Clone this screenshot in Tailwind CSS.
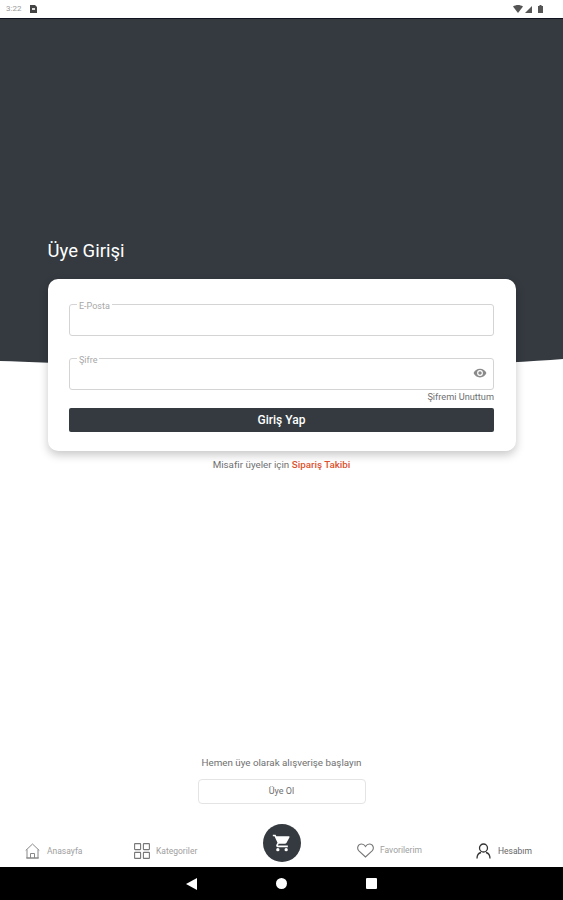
<!DOCTYPE html>
<html lang="tr">
<head>
<meta charset="utf-8">
<script src="https://cdn.jsdelivr.net/npm/@tailwindcss/browser@4"></script>
</head>
<body class="bg-white">
<div class="flex h-[900px] w-[563px] flex-col overflow-hidden font-['Roboto',sans-serif]">
  <div class="flex h-[18px] shrink-0 items-center justify-between bg-white pl-[6px] pr-[20px]">
    <div class="flex items-center gap-[9px]">
      <span class="text-[8px] leading-none text-[#9a9a9a]">3:22</span>
      <svg width="7" height="8" viewBox="0 0 7 8"><path d="M0 0h5l2 2v6H0z" fill="#444"/><rect x="2" y="3" width="3" height="2" fill="#ddd"/></svg>
    </div>
    <div class="flex items-center">
      <svg width="10" height="8" viewBox="0 0 10 8"><path d="M0 1.500C3-.5 7-.5 10 1.500L5 8z" fill="#555"/></svg>
      <svg width="7" height="7" viewBox="0 0 7 7" class="ml-[2px]"><path d="M7 0v7H0z" fill="#555"/></svg>
      <svg width="5" height="8" viewBox="0 0 5 8" class="ml-[6px]"><path d="M1.500 0h2v1H5v7H0V1h1.500z" fill="#555"/></svg>
    </div>
  </div>
  <main class="relative flex min-h-0 flex-1 flex-col">
    <svg class="absolute left-0 top-0" width="563" height="360" viewBox="0 0 563 360" preserveAspectRatio="none">
      <path d="M0 0H563V341C500 346 400 350 281 350C170 350 60 345 0 343Z" fill="#343a40"/>
      <path d="M0 0H563V1H0Z" fill="#10131f"/>
    </svg>
    <div class="relative flex flex-1 flex-col items-center pt-[221px]">
      <div class="w-[468px]">
        <h1 class="text-[18.5px] leading-[24px] font-normal text-white">Üye Girişi</h1>
        <form class="mt-[16px] flex h-[172px] flex-col rounded-[10px] bg-white px-[21.5px] pt-[25px] shadow-[0_4px_10px_rgba(0,0,0,0.22)]">
          <div class="relative h-[32px] rounded-[3px] border border-[#d4d4d4]">
            <span class="absolute left-[7px] top-[-4px] bg-white px-[2px] text-[9px] leading-[10px] text-[#a8a8a8]">E-Posta</span>
          </div>
          <div class="relative mt-[22px] flex h-[32px] items-center justify-end rounded-[3px] border border-[#d4d4d4] pr-[6px]">
            <span class="absolute left-[7px] top-[-4px] bg-white px-[2px] text-[9px] leading-[10px] text-[#a8a8a8]">Şifre</span>
            <svg width="14" height="14" viewBox="0 0 24 24" class="-translate-y-px"><path d="M12 4.500C7 4.500 2.700 7.600 1 12c1.700 4.400 6 7.500 11 7.500s9.300-3.100 11-7.500c-1.700-4.400-6-7.500-11-7.500zM12 17a5 5 0 1 1 0-10 5 5 0 0 1 0 10zm0-8a3 3 0 1 0 0 6 3 3 0 0 0 0-6z" fill="#8a8a8a"/></svg>
          </div>
          <a class="mt-[1px] self-end text-[9.2px] leading-[12px] text-[#6f6f6f]">Şifremi Unuttum</a>
          <button type="button" class="mt-[5px] h-[24px] rounded-[2px] bg-[#343a40] text-[12px] font-medium text-white">Giriş Yap</button>
        </form>
        <p class="mt-[8px] text-center text-[9.8px] leading-[12px] text-[#6f6f6f]">Misafir üyeler için <span class="font-medium text-[#dc5230]">Sipariş Takibi</span></p>
      </div>
      <div class="mt-auto flex flex-col items-center">
        <p class="text-[9.8px] leading-[12px] text-[#6f6f6f]">Hemen üye olarak alışverişe başlayın</p>
        <button type="button" class="mt-[10px] h-[25px] w-[168px] rounded-[4px] border border-[#e4e4e4] bg-white text-[9px] text-[#6f6f6f]">Üye Ol</button>
      </div>
      <nav class="relative mt-[20px] flex h-[43px] w-full items-center text-[8.5px] text-[#a0a0a0]">
        <a class="absolute left-[25px] top-[19px] flex items-center gap-[7px]">
          <svg width="15" height="16" viewBox="0 0 15 16" fill="none" stroke="#888" stroke-width="1"><path d="M.7 7.500 7.500 1l6.800 6.500M2 6.500V15h11V6.500M5.500 15v-4.500h4V15M1 15h13"/></svg>
          <span>Anasayfa</span>
        </a>
        <a class="absolute left-[134px] top-[19px] flex items-center gap-[6px]">
          <svg width="16" height="16" viewBox="0 0 16 16" fill="none" stroke="#777" stroke-width="1.100"><rect x=".6" y=".6" width="6" height="6" rx=".5"/><rect x="9.400" y=".6" width="6" height="6" rx=".5"/><rect x=".6" y="9.400" width="6" height="6" rx=".5"/><rect x="9.400" y="9.400" width="6" height="6" rx=".5"/></svg>
          <span>Kategoriler</span>
        </a>
        <a class="absolute left-[263px] top-[0px] flex h-[38px] w-[38px] items-center justify-center rounded-full bg-[#343a40]">
          <svg width="20" height="20" viewBox="0 0 24 24"><path d="M15.550 13c.750 0 1.410-.41 1.750-1.030l3.580-6.490A1 1 0 0 0 20.010 4H5.210l-.94-2H1v2h2l3.600 7.590-1.350 2.440C4.520 15.370 5.480 17 7 17h12v-2H7l1.100-2h7.450zM7 18a2 2 0 1 0 0 4 2 2 0 0 0 0-4zm10 0a2 2 0 1 0 0 4 2 2 0 0 0 0-4z" fill="#fff"/></svg>
        </a>
        <a class="absolute left-[357px] top-[19px] flex items-center gap-[6px]">
          <svg width="17" height="15" viewBox="0 0 17 15" fill="none" stroke="#777" stroke-width="1.100"><path d="M8.500 14 1.900 7.900C-.6 5.400 1 1 4.500 1c1.800 0 3.100 1 4 2.500C9.400 2 10.700 1 12.500 1 16 1 17.600 5.400 15.100 7.900z"/></svg>
          <span>Favorilerim</span>
        </a>
        <a class="absolute left-[476px] top-[19px] flex items-center gap-[7px] text-[#666]">
          <svg width="15" height="16" viewBox="0 0 15 16" fill="none" stroke="#333" stroke-width="1.300"><circle cx="7.500" cy="5" r="4"/><path d="M1 15.500c0-3.500 2-5.500 4-6M14 15.500c0-3.500-2-5.500-4-6"/></svg>
          <span>Hesabım</span>
        </a>
      </nav>
    </div>
  </main>
  <div class="flex h-[33px] shrink-0 items-center justify-center gap-[79px] bg-black">
    <svg width="11" height="12" viewBox="0 0 11 12"><path d="M11 0v12L0 6z" fill="#fff"/></svg>
    <span class="h-[11px] w-[11px] rounded-full bg-white"></span>
    <span class="h-[11px] w-[11px] rounded-[1px] bg-white"></span>
  </div>
</div>
</body>
</html>
